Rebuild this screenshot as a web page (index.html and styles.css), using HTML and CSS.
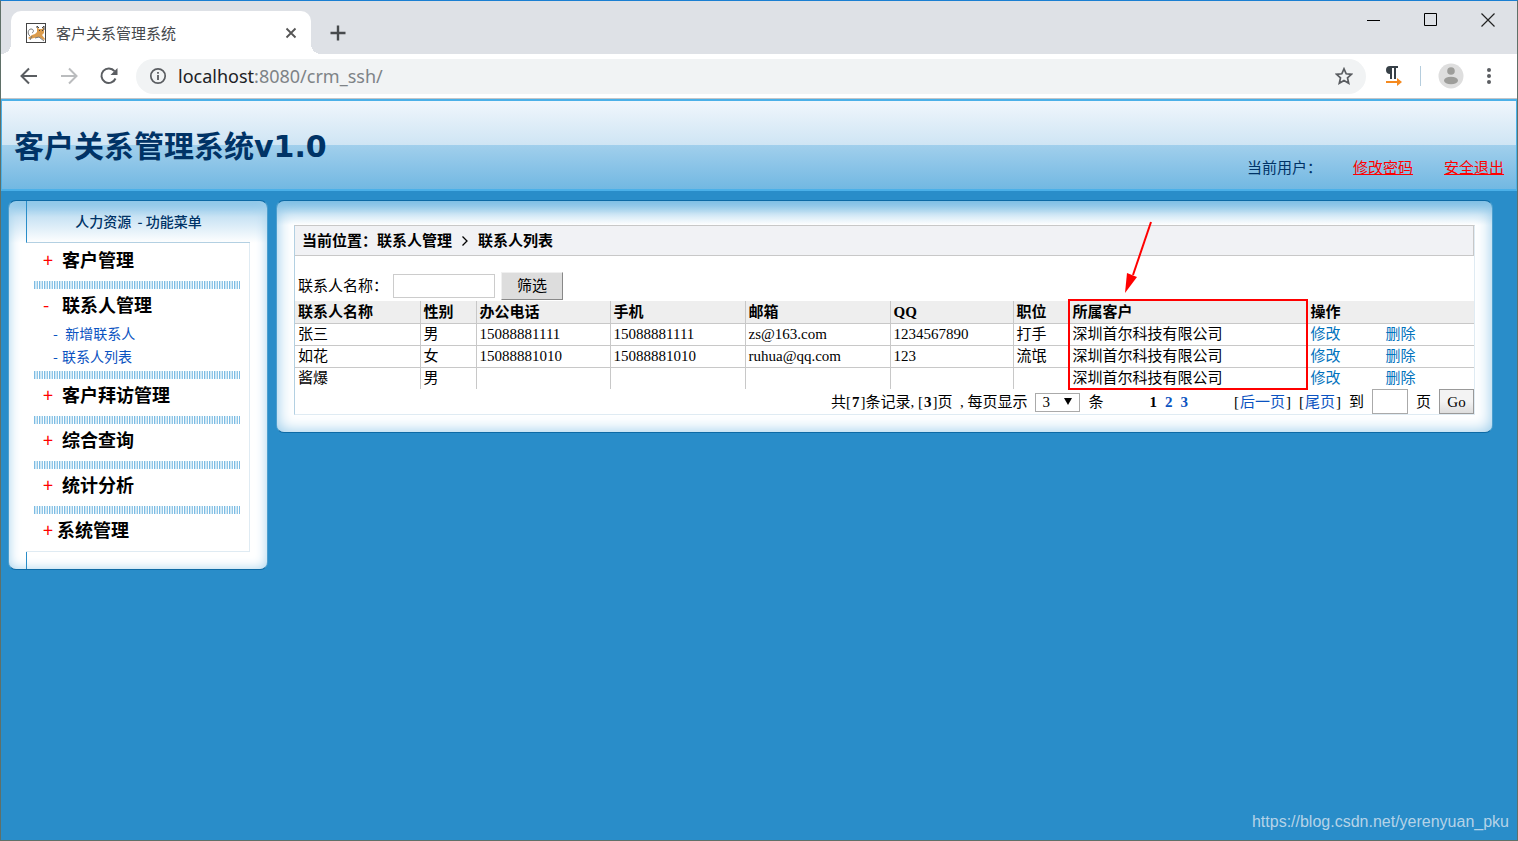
FILE: index.html
```html
<!DOCTYPE html>
<html lang="zh-CN">
<head>
<meta charset="utf-8">
<title>客户关系管理系统</title>
<link rel="stylesheet" href="styles.css">
</head>
<body>
<div class="window">
  <header class="tabstrip">
    <div class="tab">
      <svg class="favicon" width="20" height="20" viewBox="0 0 20 20"><rect x=".5" y=".5" width="19" height="19" fill="#fff" stroke="#444"/><path d="M2 15l4-3 3-1 2-2V4l2 2h3l2-2v6l-2 2 3 4-1 1-5-3-5 1-4 1z" fill="#dc9c4c"/><path d="M11 5V3l2 2M16 5l2-2v4M13 7.500h1M16 7.500h1" fill="none" stroke="#444"/><path d="M4 13C1 11 2 6 5 6s3 3 1 4M9 15l4-1 5 4M6 13l-2 4" fill="none" stroke="#777"/></svg>
      <span class="tab-title">客户关系管理系统</span>
      <button class="icon-btn" aria-label="关闭标签页"><svg width="12" height="12" viewBox="0 0 12 12"><path d="M1.500 1.500l9 9M10.500 1.500l-9 9" stroke="#555" stroke-width="1.800"/></svg></button>
    </div>
    <button class="icon-btn newtab" aria-label="新标签页"><svg width="16" height="16" viewBox="0 0 16 16"><path d="M8 .5v15M.5 8h15" stroke="#474a4d" stroke-width="2.400"/></svg></button>
    <div class="controls">
      <button class="icon-btn" aria-label="最小化"><svg width="14" height="14" viewBox="0 0 14 14"><path d="M0 7.500h13" stroke="#000"/></svg></button>
      <button class="icon-btn" aria-label="最大化"><svg width="14" height="14" viewBox="0 0 14 14"><path d="M.5 .5h12v12H.5z" fill="none" stroke="#000"/></svg></button>
      <button class="icon-btn" aria-label="关闭"><svg width="14" height="14" viewBox="0 0 14 14"><path d="M.5 .5l13 13M13.500 .5l-13 13" stroke="#222" stroke-width="1.200"/></svg></button>
    </div>
  </header>
  <nav class="toolbar">
    <button class="icon-btn" aria-label="后退"><svg width="18" height="18" viewBox="0 0 18 18"><path d="M17 9H2M9 1.500L1.500 9 9 16.500" fill="none" stroke="#5a5d61" stroke-width="2"/></svg></button>
    <button class="icon-btn" aria-label="前进"><svg width="18" height="18" viewBox="0 0 18 18"><path d="M1 9h15M9 1.500L16.500 9 9 16.500" fill="none" stroke="#babcbe" stroke-width="2"/></svg></button>
    <button class="icon-btn" aria-label="刷新"><svg width="18" height="18" viewBox="0 0 18 18"><path d="M15.500 11.500A7.300 7.300 0 1 1 14.500 4.200" fill="none" stroke="#5a5d61" stroke-width="2"/><path d="M17.500 1v7h-7z" fill="#5a5d61"/></svg></button>
    <div class="omnibox">
      <svg width="18" height="18" viewBox="0 0 18 18"><circle cx="9" cy="9" r="7.200" fill="none" stroke="#5a5d61" stroke-width="1.700"/><path d="M9 8v5M9 5v1.800" stroke="#5a5d61" stroke-width="1.800"/></svg>
      <span class="url"><b>localhost</b>:8080/crm_ssh/</span>
      <button class="icon-btn" aria-label="收藏"><svg width="18" height="18" viewBox="0 0 18 18"><path d="M9 1.800l2.200 5 5.300.5-4 3.600 1.200 5.300L9 13.400l-4.700 2.800 1.200-5.300-4-3.600 5.300-.5z" fill="none" stroke="#5a5d61" stroke-width="1.700"/></svg></button>
    </div>
    <div class="extras">
      <button class="icon-btn" aria-label="扩展程序"><svg width="18" height="20" viewBox="0 0 18 20"><path d="M13 0H5a4 4 0 0 0 0 8v5h2V2h2v11h2V2h2z" fill="#374047"/><path d="M1 15h11v-3l5 4-5 4v-3H1z" fill="#f58a1f"/></svg></button>
      <span class="divider"></span>
      <button class="icon-btn" aria-label="用户"><svg width="26" height="26" viewBox="0 0 26 26"><circle cx="13" cy="13" r="12.500" fill="#dedede"/><circle cx="13" cy="8" r="3.800" fill="#9d9d9a"/><ellipse cx="13" cy="17.500" rx="7" ry="3.800" fill="#9d9d9a"/></svg></button>
    </div>
    <button class="icon-btn" aria-label="菜单"><svg width="6" height="18" viewBox="0 0 6 18"><g fill="#5a5d61"><circle cx="3" cy="3" r="2"/><circle cx="3" cy="9" r="2"/><circle cx="3" cy="15" r="2"/></g></svg></button>
  </nav>
  <div class="banner">
    <h1>客户关系管理系统v1.0</h1>
    <div class="user"><span>当前用户：</span><a href="#">修改密码</a><a href="#">安全退出</a></div>
  </div>
  <div class="columns">
    <aside class="panel side">
      <h2 class="side-title">人力资源&nbsp; - 功能菜单</h2>
      <div class="menu">
        <section><h3><i>+</i>客户管理</h3></section>
        <section class="open"><h3><i>-</i>联系人管理</h3>
          <a href="#"><span>-</span>&nbsp;新增联系人</a><a href="#"><span>-</span>联系人列表</a></section>
        <section><h3><i>+</i>客户拜访管理</h3></section>
        <section><h3><i>+</i>综合查询</h3></section>
        <section><h3><i>+</i>统计分析</h3></section>
        <section class="tight"><h3><i>+</i>系统管理</h3></section>
      </div>
      <div class="side-foot"></div>
    </aside>
    <main class="panel main">
      <div class="frame">
        <div class="crumb">当前位置：联系人管理 <svg width="8" height="12" viewBox="0 0 8 12"><path d="M1.500 1.500L6 6l-4.500 4.500" fill="none" stroke="#000" stroke-width="1.300"/></svg> 联系人列表</div>
        <form class="filter"><label for="name">联系人名称：</label><input id="name" type="text"><button type="button">筛选</button></form>
        <table>
          <colgroup><col class="c1"><col class="c2"><col class="c3"><col class="c4"><col class="c5"><col class="c6"><col class="c7"><col class="c8"><col class="c9"></colgroup>
          <thead><tr><th>联系人名称</th><th>性别</th><th>办公电话</th><th>手机</th><th>邮箱</th><th>QQ</th><th>职位</th><th class="marked">所属客户<div class="callout"><svg width="30" height="74" viewBox="0 0 30 74"><path d="M27 1L9 54" stroke="#f00" stroke-width="2"/><path d="M1 72l2-20 10 4z" fill="#f00"/></svg></div></th><th>操作</th></tr></thead>
          <tbody>
            <tr><td>张三</td><td>男</td><td>15088881111</td><td>15088881111</td><td>zs@163.com</td><td>1234567890</td><td>打手</td><td>深圳首尔科技有限公司</td><td><a href="#">修改</a><a href="#">删除</a></td></tr>
            <tr><td>如花</td><td>女</td><td>15088881010</td><td>15088881010</td><td>ruhua@qq.com</td><td>123</td><td>流氓</td><td>深圳首尔科技有限公司</td><td><a href="#">修改</a><a href="#">删除</a></td></tr>
            <tr><td>酱爆</td><td>男</td><td></td><td></td><td></td><td></td><td></td><td>深圳首尔科技有限公司</td><td><a href="#">修改</a><a href="#">删除</a></td></tr>
          </tbody>
        </table>
        <div class="pager">
          <span class="count">共[<b>7</b>]条记录,&nbsp;[<b>3</b>]页&nbsp; ,&nbsp;每页显示</span>
          <div class="select"><select aria-label="每页显示"><option>3</option></select><svg width="8" height="7" viewBox="0 0 8 7"><path d="M0 0h8L4 7z"/></svg></div>
          <span>条</span>
          <span class="pages"><b>1</b><a href="#">2</a><a href="#">3</a></span>
          <span class="jump">[<a href="#">后一页</a>]</span>
          <span class="jump">[<a href="#">尾页</a>]</span>
          <label for="page">到</label><input id="page" type="text"><span>页</span>
          <button type="button">Go</button>
        </div>
      </div>
    </main>
  </div>
  <footer>https://blog.csdn.net/yerenyuan_pku</footer>
</div>
</body>
</html>
```
FILE: styles.css
```css
* { box-sizing: border-box; }
body { margin: 0; font: 15px/20px "Liberation Serif", "Noto Sans CJK SC", serif; color: #000; }
h1, h2, h3 { margin: 0; }
a { color: #0b53c1; text-decoration: none; }
svg { display: block; flex: none; }
.window { min-height: 100vh; display: flex; flex-direction: column; background: #298dc9; border: 1px solid #5f7068; border-top-color: #1a7fd2; }
.icon-btn { display: flex; align-items: center; justify-content: center; padding: 0; border: 0; background: none; }
.tabstrip { height: 53px; display: flex; align-items: flex-end; background: #dee1e6; padding-left: 10px; }
.tab { position: relative; width: 300px; height: 43px; display: flex; align-items: center; padding: 0 14px 0 15px; background: #fff; border-radius: 10px 10px 0 0; }
.tab::before, .tab::after { content: ""; position: absolute; bottom: 0; width: 10px; height: 10px; }
.tab::before { right: 100%; background: radial-gradient(circle at 0 0, #dee1e6 10px, #fff 10px); }
.tab::after { left: 100%; background: radial-gradient(circle at 100% 0, #dee1e6 10px, #fff 10px); }
.tab-title { flex: 1; margin-left: 10px; color: #45484c; font: 15px/20px "Noto Sans CJK SC", sans-serif; }
.newtab { height: 43px; margin-left: 19px; }
.controls { margin-left: auto; align-self: flex-start; display: flex; gap: 43px; padding: 12px 22px 0 0; }
.toolbar { height: 45px; display: flex; align-items: center; gap: 22px; padding: 0 25px 0 19px; border-bottom: 1px solid #c3c5c8; background: #fff; }
.omnibox { flex: 1; height: 35px; display: flex; align-items: center; gap: 11px; padding: 0 13px; margin: 0 -3px 0 -4px; border-radius: 18px; background: #f1f3f4; }
.extras { display: flex; align-items: center; gap: 17px; }
.url { flex: 1; color: #7e8387; font: 18px/24px "Noto Sans", sans-serif; }
.url b { color: #202124; font-weight: 400; }
.divider { width: 1px; height: 20px; background: #b5cddd; }
.banner { height: 92px; display: flex; justify-content: space-between; padding: 0 12px; border: 1px solid #4bb0e8; border-top-width: 2px; border-bottom-width: 2px; background: linear-gradient(#f0f6fc, #cfe5f4 50%, #a1cfec 50%, #72b8e2); }
.banner h1 { color: #036; font: bold 30px/40px "DejaVu Sans", "Noto Sans CJK SC", sans-serif; padding-top: 26px; }
.user { display: flex; gap: 31px; padding-top: 56px; color: #036; font: 15px/20px "Noto Sans CJK SC", sans-serif; }
.user a { color: #f00; text-decoration: underline; }
.columns { display: flex; align-items: flex-start; gap: 8px; padding: 9px 24px 0 7px; }
.panel { border: 1px solid; border-color: #0d6aa5 #4d9fce; border-radius: 8px; }
.side { width: 260px; flex: none; padding: 0 17px; box-shadow: inset 0 0 12px #a4d1ec; background: linear-gradient(#7fc0e6, #c9e3f4 16px, #fff 42px); font-family: "Noto Sans CJK SC", sans-serif; }
.side-title { height: 42px; border-left: 1px solid #298dc9; border-bottom: 1px solid #b3d0e2; color: #036; font-size: 14px; font-weight: 500; line-height: 40px; text-align: center; }
.menu { border: solid #dfebf3; border-width: 0 1px 1px 0; padding: 0 9px 0 8px; background: #fff; }
.side-foot { height: 17px; border-left: 1px solid #298dc9; }
.menu section + section::before { content: ""; display: block; height: 8px; background: repeating-linear-gradient(90deg, #7dbbe2 0 1px, #cfe8f6 1px 3px, #8fc6e8 3px 4px, #fff 4px 5px); }
.menu h3 { height: 37px; padding-left: 9px; font-size: 18px; font-weight: 700; line-height: 30px; }
.menu section:first-child h3 { height: 38px; line-height: 32px; }
.menu i { display: inline-block; width: 19px; color: #f00; font-style: normal; font-weight: 400; }
.menu .tight i { width: 14px; }
.menu .open h3 { height: 33px; }
.menu .open { padding-bottom: 3px; }
.menu a { display: block; height: 23px; padding-left: 19px; font-size: 14px; line-height: 23px; }
.menu a span { display: inline-block; width: 9px; }
.main { flex: 1; min-width: 0; padding: 24px 17px 17px; box-shadow: inset 0 0 16px #8fc6e8; background: linear-gradient(#74bae2, #d4e9f6 14px, #fff 24px); }
.frame { border: 1px solid #dfebf3; border-top-color: #c8c8c8; border-left-color: #b3d0e2; background: #fff; }
.crumb { height: 30px; display: flex; align-items: center; gap: 9px; padding-left: 7px; border: 1px solid #c8c8c8; border-width: 0 1px 1px 0; background: #f1f2f5; font-weight: 700; }
.filter { height: 45px; display: flex; align-items: center; padding: 14px 3px 0; }
.filter label { width: 95px; }
.filter input { width: 102px; height: 24px; border: 1px solid #ccc; }
.filter button { width: 62px; height: 28px; margin-left: 6px; border: 1px solid; border-color: #f0f0f0 #888 #888 #f0f0f0; background: #ddd; font: inherit; }
table { width: 100%; table-layout: fixed; border-collapse: collapse; }
th, td { height: 22px; padding: 0 3px; border-right: 1px solid #c8c8c8; text-align: left; line-height: 20px; }
th:last-child, td:last-child { border-right: 0; }
th { background: #eee; }
tbody td { border-top: 1px solid #c8c8c8; }
td a { display: inline-block; width: 75px; color: #0273bd; }
.c1 { width: 125px; } .c2 { width: 56px; } .c3 { width: 134px; } .c4 { width: 135px; } .c5 { width: 145px; } .c6 { width: 123px; } .c7 { width: 56px; } .c8 { width: 238px; }
.marked { position: relative; }
.callout { position: absolute; top: -2px; left: -2px; right: -1px; height: 91px; border: 2px solid #f00; }
.callout svg { position: absolute; left: 54px; bottom: 93px; }
.pager { display: flex; justify-content: flex-end; align-items: center; gap: 8px; }
.count b, .jump a { margin: 0 1px; }
.select { position: relative; }
.select select { appearance: none; width: 45px; height: 19px; padding: 0 6px; border: 1px solid #aaa; border-radius: 0; background: #fff; font: inherit; line-height: 17px; }
.select svg { position: absolute; right: 8px; top: 6px; pointer-events: none; }
.pages { display: flex; gap: 8px; margin: 0 38px; font-weight: 700; }
.pager input { width: 36px; height: 25px; border: 1px solid #aaa; }
.pager button { width: 35px; height: 25px; padding: 0; border: 1px solid #999; background: linear-gradient(#f3f3f3 50%, #ddd); font: inherit; }
footer { margin-top: auto; padding: 0 8px 8px 0; text-align: right; color: #b5d3e8; font: 16px/20px "Liberation Sans", sans-serif; }
```
